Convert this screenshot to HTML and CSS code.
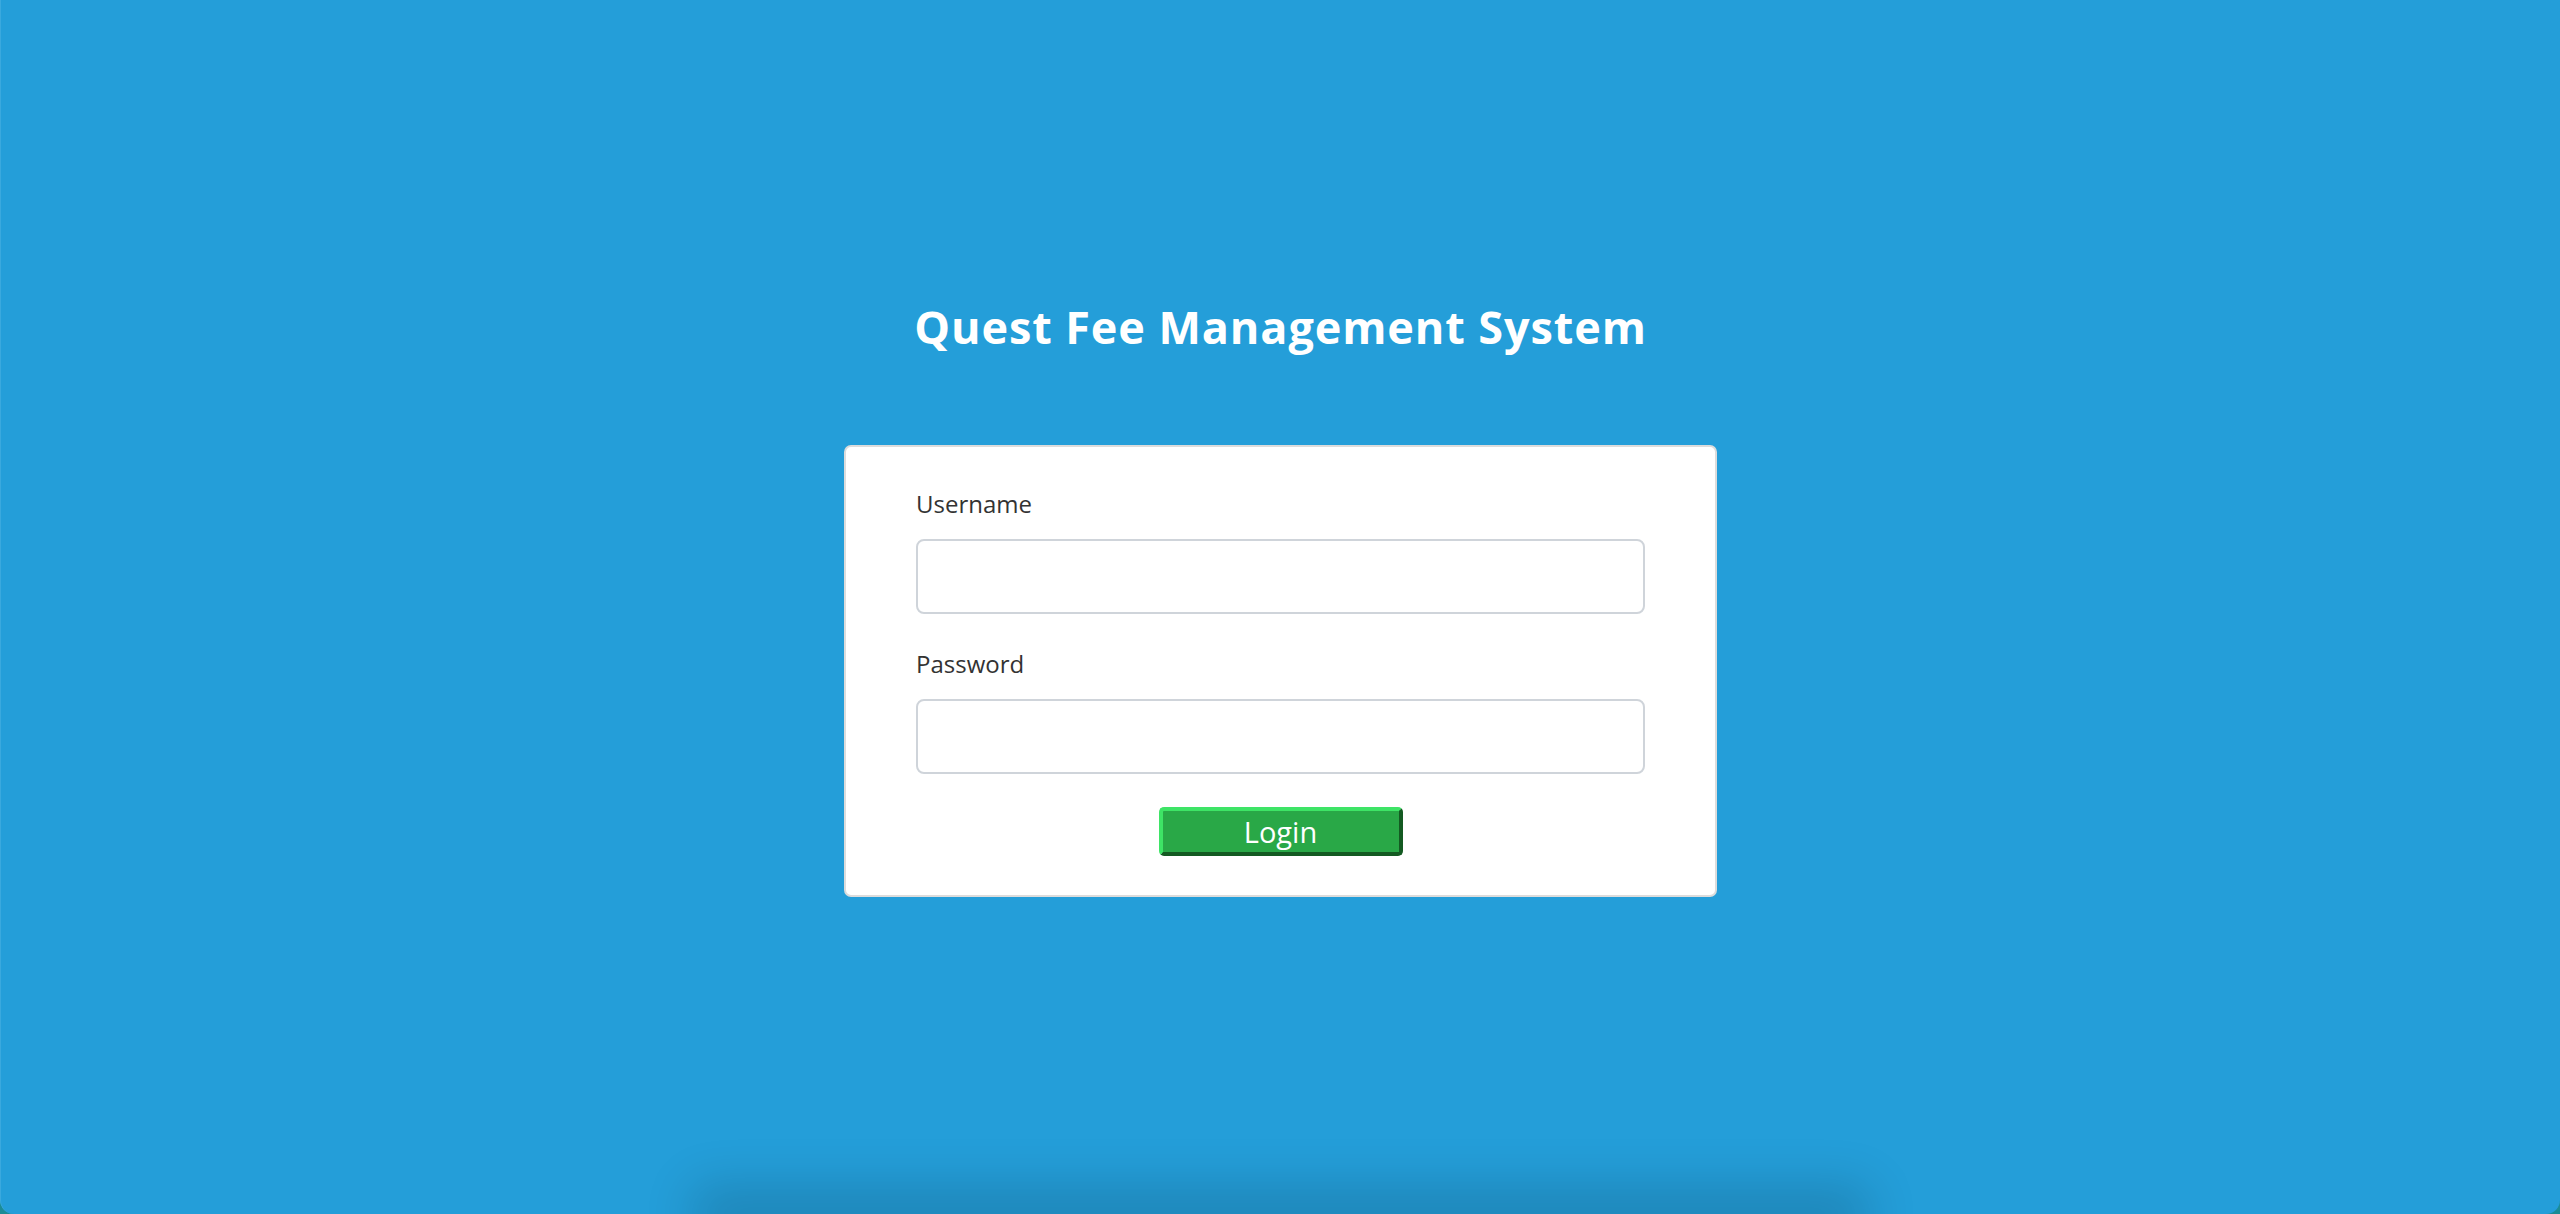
FILE: index.html
```html
<!DOCTYPE html>
<html lang="en">
<head>
<meta charset="utf-8">
<title>Quest Fee Management System</title>
<link rel="stylesheet" href="styles.css">
</head>
<body>
<div class="window">
  <main class="page">
    <h1 class="title">Quest Fee Management System</h1>
    <form class="card" onsubmit="return false;">
      <label class="field-label" for="username">Username</label>
      <input class="field" id="username" type="text">
      <label class="field-label field-label--spaced" for="password">Password</label>
      <input class="field" id="password" type="password">
      <div class="actions">
        <button class="login" type="submit">Login</button>
      </div>
    </form>
  </main>
  <div class="floor-shadow"></div>
</div>
</body>
</html>
```

FILE: styles.css
```css
html, body {
  margin: 0;
  padding: 0;
}

body {
  background: #1b8c96;
  height: 1214px;
  overflow: hidden;
}

.window {
  height: 1214px;
  background: #249ed9;
  border-radius: 0 0 14px 14px;
  border-left: 1px solid #3aa9de;
  box-sizing: border-box;
  overflow: hidden;
  display: flex;
  flex-direction: column;
}

.page {
  display: flex;
  flex-direction: column;
  align-items: center;
  padding-top: 297px;
}

.title {
  margin: 0;
  font-family: "Open Sans", "Lato", sans-serif;
  font-weight: 700;
  font-size: 45px;
  line-height: 60px;
  color: #ffffff;
  letter-spacing: 0.9px;
}

.card {
  margin-top: 88px;
  width: 873px;
  box-sizing: border-box;
  background: #ffffff;
  border: 2px solid #dcdcdc;
  border-radius: 7px;
  padding: 39px 70px 39px;
  display: flex;
  flex-direction: column;
}

.field-label {
  display: block;
  font-family: "Open Sans", sans-serif;
  font-size: 24px;
  line-height: 36px;
  color: #333333;
  margin-bottom: 17px;
}

.field-label--spaced {
  margin-top: 32px;
}

.field {
  display: block;
  width: 100%;
  height: 75px;
  box-sizing: border-box;
  border: 2px solid #cfd4da;
  border-radius: 8px;
  background: #ffffff;
  padding: 0 20px;
  font-family: "Open Sans", sans-serif;
  font-size: 24px;
  outline: none;
}

.actions {
  display: flex;
  justify-content: center;
  margin-top: 33px;
}

.login {
  width: 244px;
  height: 49px;
  box-sizing: border-box;
  background: #29a847;
  color: #ffffff;
  font-family: "Open Sans", sans-serif;
  font-size: 29px;
  line-height: 1;
  padding: 0;
  border-style: solid;
  border-width: 4px;
  border-color: #3ee466 #145a22 #145a22 #3ee466;
  border-radius: 5px;
  cursor: pointer;
}

.floor-shadow {
  margin-top: auto;
  align-self: center;
  width: 1120px;
  height: 0;
  box-shadow: 0 0 50px 28px rgba(0, 0, 0, 0.16);
}
```
